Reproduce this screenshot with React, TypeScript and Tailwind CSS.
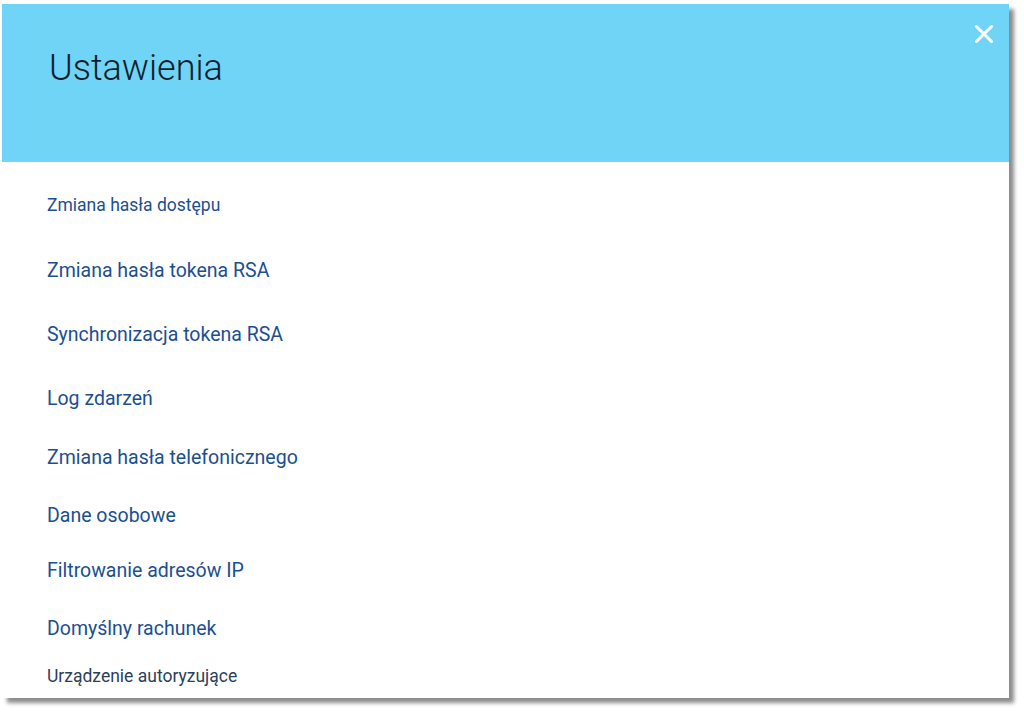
import { X } from 'lucide-react';

interface SettingsLink {
  label: string;
  size: 'sm' | 'md';
  gap: string;
  muted?: boolean;
}

const links: SettingsLink[] = [
  { label: 'Zmiana hasła dostępu', size: 'sm', gap: 'mt-0' },
  { label: 'Zmiana hasła tokena RSA', size: 'md', gap: 'mt-[42px]' },
  { label: 'Synchronizacja tokena RSA', size: 'md', gap: 'mt-[40px]' },
  { label: 'Log zdarzeń', size: 'md', gap: 'mt-[40px]' },
  { label: 'Zmiana hasła telefonicznego', size: 'md', gap: 'mt-[35px]' },
  { label: 'Dane osobowe', size: 'md', gap: 'mt-[34px]' },
  { label: 'Filtrowanie adresów IP', size: 'md', gap: 'mt-[31px]' },
  { label: 'Domyślny rachunek', size: 'md', gap: 'mt-[34px]' },
  { label: 'Urządzenie autoryzujące', size: 'sm', gap: 'mt-[23px]', muted: true },
];

export default function App() {
  return (
    <div className="min-h-[718px] w-[1024px] bg-white pl-[2px] pt-[4px] font-['Roboto','Liberation_Sans',sans-serif]">
      {/* Modal */}
      <div className="flex h-[694px] w-[1007px] flex-col bg-white shadow-[5px_5px_4px_rgba(0,0,0,0.45)]">
        {/* Header */}
        <div className="flex h-[158px] shrink-0 items-start justify-between bg-[#6fd4f6] pl-[47px] pr-[10px]">
          <h1 className="mt-[42px] text-[36px] font-light leading-[44px] text-[#0f1e2e]">
            Ustawienia
          </h1>
          <button className="mt-[15px] text-white" aria-label="Zamknij">
            <X size={30} strokeWidth={2.4} />
          </button>
        </div>

        {/* Links */}
        <nav className="flex flex-col items-start pl-[45px] pt-[31px]">
          {links.map((link) => (
            <a
              key={link.label}
              href="#"
              className={`${link.gap} leading-6 ${
                link.size === 'sm' ? 'text-[17.5px]' : 'text-[19.5px]'
              } ${link.muted ? 'text-[#2b3f5c]' : 'text-[#1b4f91]'}`}
            >
              {link.label}
            </a>
          ))}
        </nav>
      </div>
    </div>
  );
}
